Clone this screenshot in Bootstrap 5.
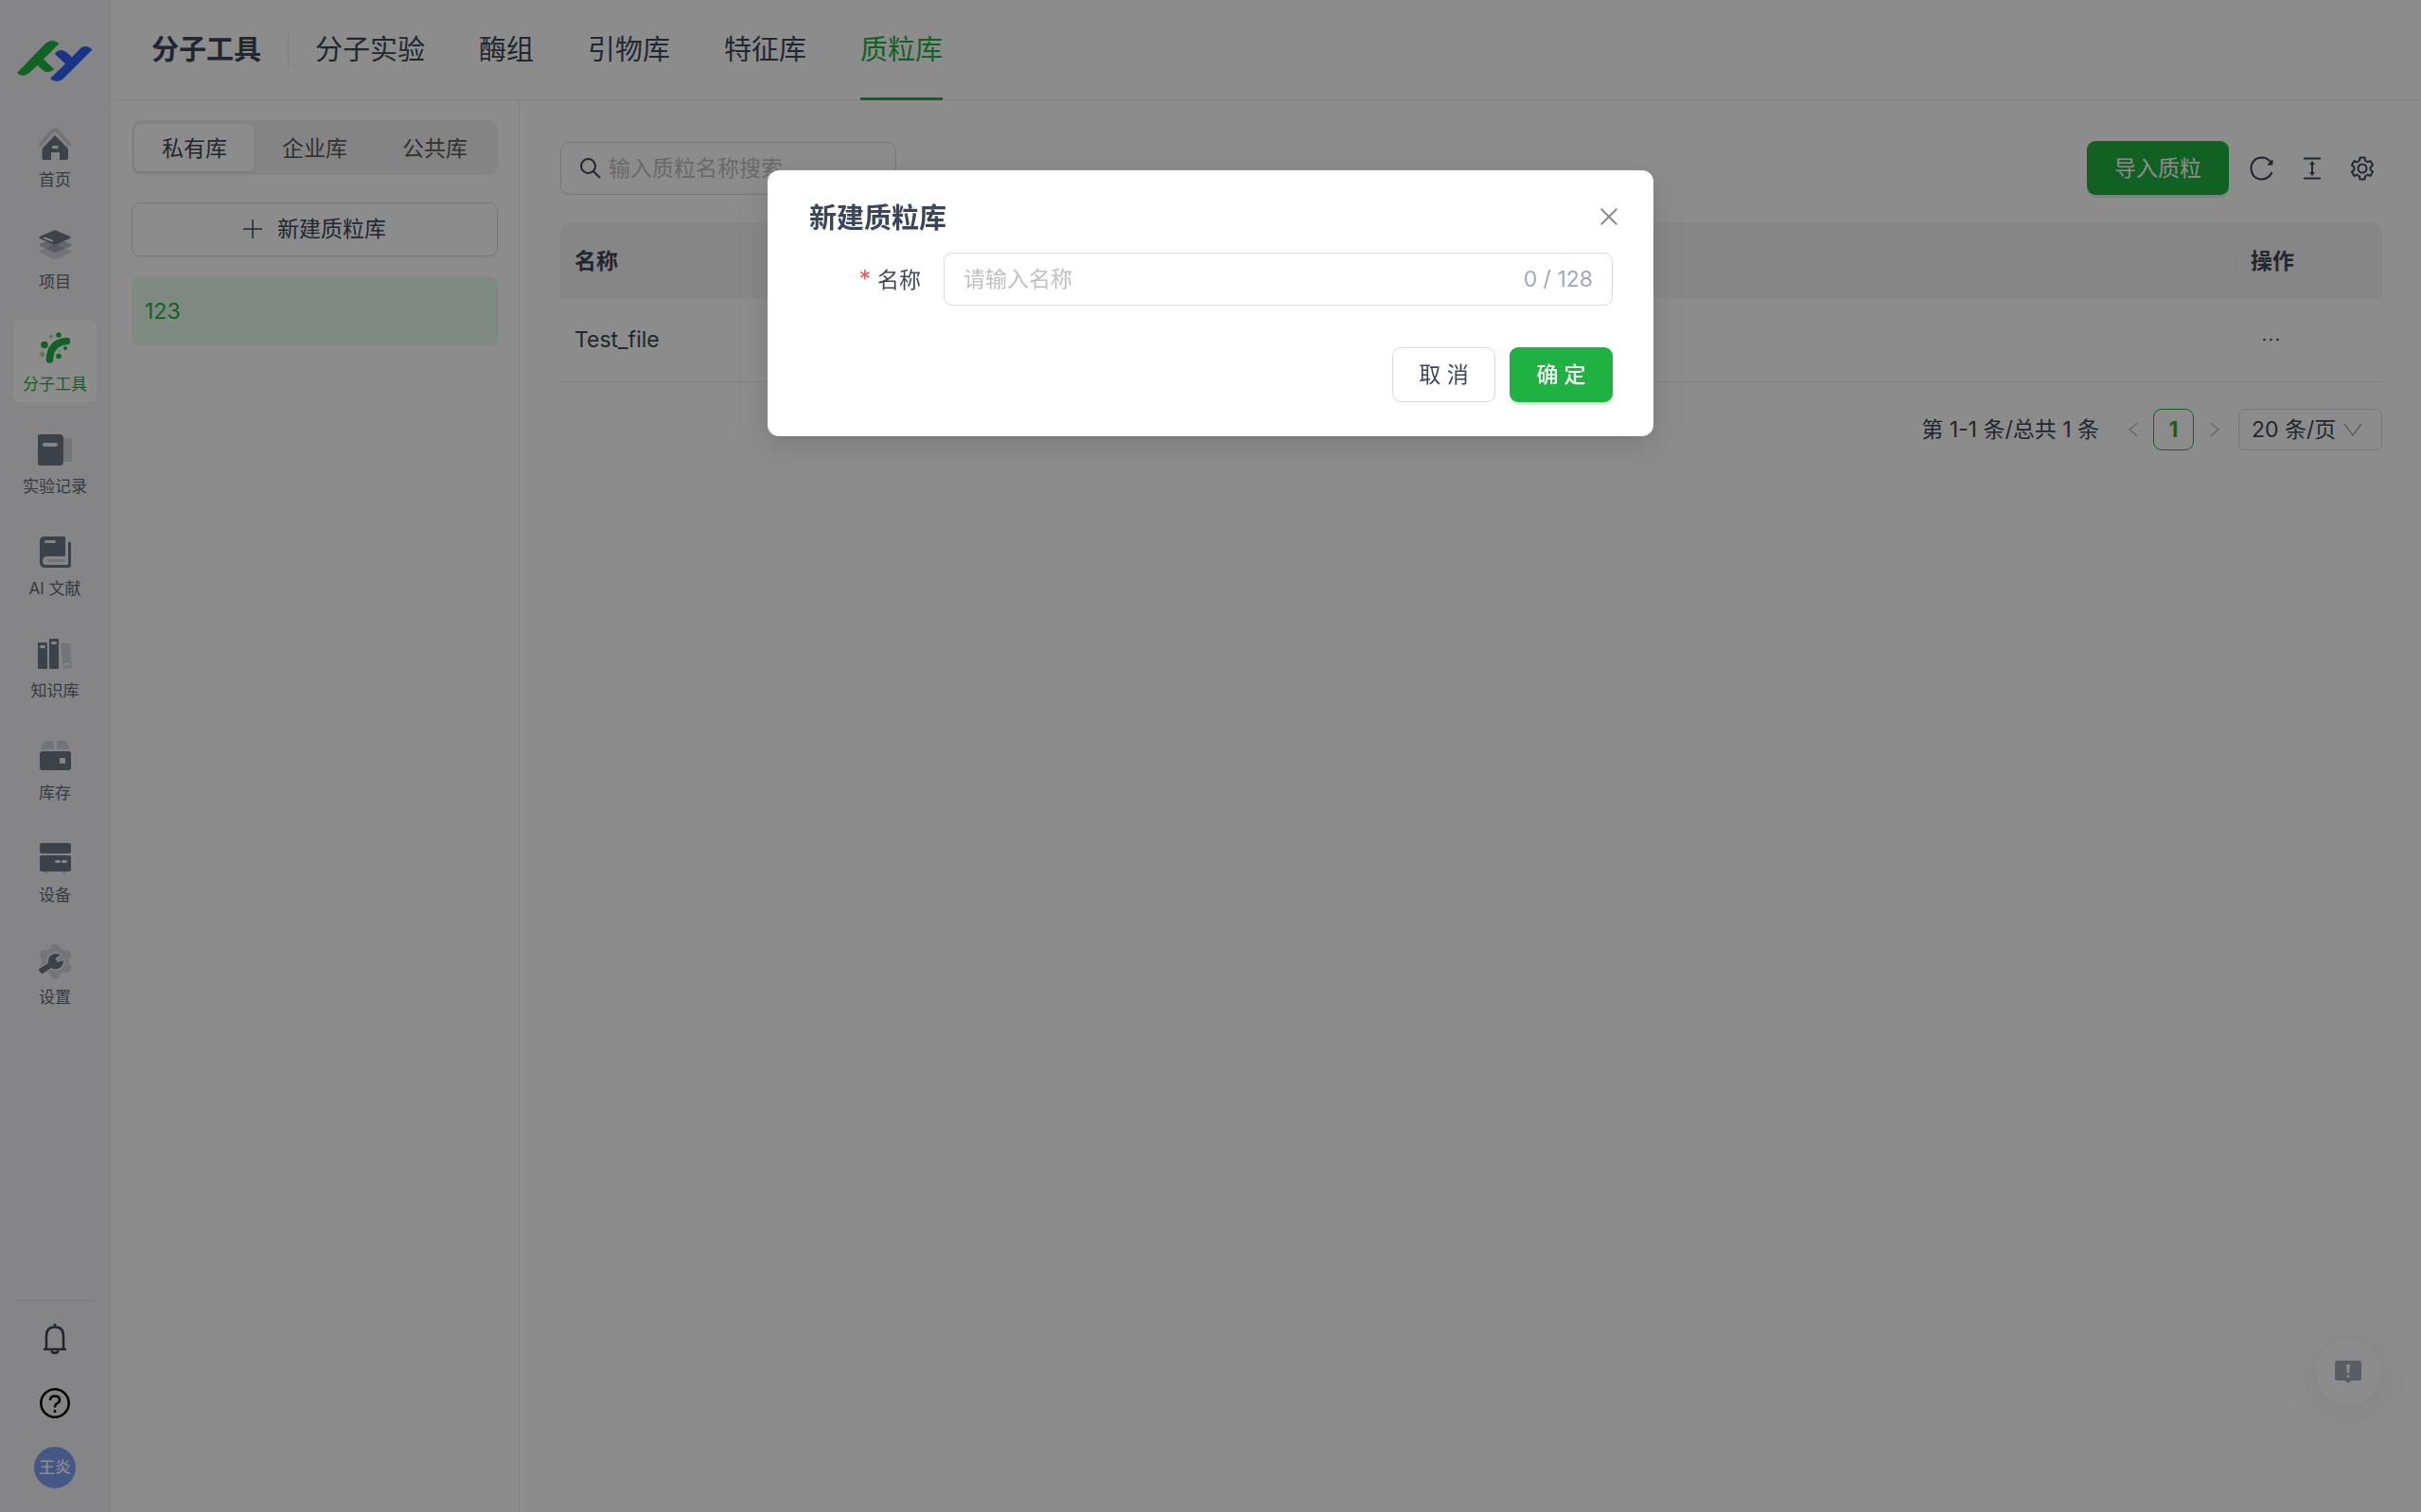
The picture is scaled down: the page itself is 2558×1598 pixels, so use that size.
<!DOCTYPE html>
<html lang="zh-CN">
<head>
<meta charset="utf-8">
<meta name="viewport" content="width=device-width, initial-scale=1">
<title>质粒库 - 分子工具</title>
<link href="https://cdn.jsdelivr.net/npm/bootstrap@5.3.0/dist/css/bootstrap.min.css" rel="stylesheet">
<style>
:root{--ink:#3d4658;--slate:#616b7a;--pale:#d1d3da;--brand:#1fb141;--line:#d9d9d9;--soft:#ebedf0}
body{font-family:Inter,"Noto Sans CJK SC",sans-serif;font-size:23px;line-height:36px;color:var(--ink);background:#fff}
svg{display:block;flex:none}
button{font-family:inherit}
.side{width:117px;background:#f2f3f7;border-right:1px solid #e9eaef;padding:43px 0 25px}
.logo{margin-bottom:35px}
.side-list{gap:21px}
.side-link{width:88px;padding:12px 0 7px;border-radius:7px;font-size:17px;line-height:24px;color:var(--slate);text-decoration:none;white-space:nowrap}
.side-link svg{margin-bottom:8px}
.side-link.active{background:#fff;color:var(--brand)}
.side-foot{width:88px;border-top:1px solid #e2e4ea;padding-top:18px;gap:24px}
.round-btn{width:44px;height:44px;border:0;padding:0;background:none;border-radius:50%;color:#3d4658}
.avatar{background:#7f9ff5;color:#fff;font-size:17px;font-weight:500}
.topbar{height:106px;border-bottom:1px solid var(--soft);padding-left:43px;font-size:29px}
.topbar h1{font-size:29px;font-weight:700;line-height:44px;margin:0;padding-right:28px;border-right:0}
.rule{width:1px;height:36px;background:#e3e5e8;margin-right:28px}
.top-tabs{gap:57px;height:106px}
.top-tabs a{color:var(--ink);text-decoration:none;line-height:105px;height:106px;border-bottom:3px solid transparent}
.top-tabs a.active{color:var(--brand);border-color:var(--brand)}
.lib{width:432px;border-right:1px solid var(--soft);padding:21px 22px 0 22px}
.seg{background:#f1f1f1;border-radius:9px;padding:4px 3px;height:58px}
.seg button{flex:1 1 0;border:0;background:none;border-radius:7px;color:#595959;padding:1px 0 0}
.seg button.active{background:#fff;color:var(--ink);box-shadow:0 1px 4px rgba(0,0,0,.1)}
.plain-btn{border:1px solid var(--line);border-radius:9px;background:#fff;color:var(--ink);box-shadow:0 3px 0 rgba(0,0,0,.02)}
.new-btn{height:57px;margin-top:29px;gap:16px;padding:0 0 2px}
.lib-item{margin-top:22px;height:72px;border-radius:7px;background:#e6f9ec;color:var(--brand);padding:0 14px;text-decoration:none}
.work{padding:43px 41px 0 43px}
.field{height:56px;border:1px solid var(--line);border-radius:9px;background:#fff;padding:0 20px}
.field input{border:0;outline:0;background:none;min-width:0;padding:0;color:var(--ink)}
.field input::placeholder{color:#bfbfbf;opacity:1}
.search{width:355px;gap:8px}
.go-btn{border:0;border-radius:9px;background:var(--brand);color:#fff;box-shadow:0 3px 0 #dff4e3}
.import-btn{width:150px;height:57px;margin-right:3px}
.tool-btn{width:42px;height:42px;border:0;background:none;padding:0;color:var(--ink)}
.tools{gap:11px}
.grid{margin:29px 0 0;--bs-table-bg:transparent;color:var(--ink)}
.grid th{height:81px;padding:0 15px;background:#f5f5f5;border:0;vertical-align:middle;font-weight:700}
.grid th:first-child{border-top-left-radius:12px}
.grid th:last-child{border-top-right-radius:12px;width:154px}
.grid th:last-child span{display:block;border-left:1px solid #ececec;margin-left:-15px;padding-left:14px}
.grid td{height:87px;padding:0 15px;border-bottom:1px solid var(--soft);vertical-align:middle;color:var(--ink)}
.grid thead,.grid tbody{border:0}
.more-btn{border:0;background:none;padding:0;width:42px;height:36px;color:var(--ink)}
.pager{margin-top:28px;height:44px}
.pager button{width:43px;height:44px;border:0;background:none;padding:0;color:#b9bcc2}
.pager .current{border:1px solid var(--brand);border-radius:9px;color:var(--brand);font-weight:700}
.total{padding-right:14px}
.size-box{width:152px;margin-left:4px}
.size-box select{appearance:none;height:44px;border:1px solid var(--line);border-radius:7px;background:#fff;color:var(--ink);padding:0 13px;line-height:36px}
.size-box svg{position:absolute;right:21px;top:15px;pointer-events:none}
.feedback{position:fixed;right:41px;bottom:112px;width:72px;height:72px;border-radius:50%;border:1px solid #f3f3f3;background:#fff;box-shadow:0 8px 36px rgba(0,0,0,.06);color:#a3abba;padding:0}
.modal-backdrop.show{opacity:.45}
.modal-dialog{max-width:936px;margin-top:180px}
.modal-content{border:0;border-radius:12px;padding:29px 43px 36px 44px;color:var(--ink);box-shadow:0 9px 23px rgba(0,0,0,.08),0 4px 9px -6px rgba(0,0,0,.12),0 13px 40px 12px rgba(0,0,0,.05)}
.modal-title{font-size:29px;line-height:44px;font-weight:700}
.x-btn{width:32px;height:32px;border:0;background:none;color:#8c8c8c;padding:0;margin-right:-12px}
.name-row{margin-top:14px}
.name-row label{width:142px;padding-right:24px;text-align:right}
.must{color:#ff4d4f;margin-right:7px;font-size:25px}
.count{color:#9ca8bd;white-space:nowrap}
.acts{margin-top:44px;gap:15px}
.acts button{width:109px;height:58px}
.acts .go-btn{font-weight:500}
</style>
</head>
<body>
<svg width="0" height="0" class="position-absolute" aria-hidden="true">
  <defs>
    <path id="tooth" d="M-4.3-7.5L-3-8.3L-2.5-11.4H2.5L3-8.3L4.3-7.5"/>
    <path id="lobe" d="M-7-12L-5-13.500L-4-16.500Q-3.500-18-2-18H2Q3.500-18 4-16.500L5-13.500L7-12V0H-7Z"/>
  </defs>
</svg>
<div class="d-flex vh-100">
  <aside class="side d-flex flex-column align-items-center flex-shrink-0">
    <a class="logo" href="#" aria-label="首页">
      <svg width="80" height="44" viewBox="0 0 80 44"><path fill="#1fb541" d="M0 34L29 4Q33 0 38 0Q42 1 44.500 3L28 19.500L39 30Q36 33.500 31 33Q29 33 27 31L21.500 26L13 34Q10 37 6 37Q3 37 0 34Z"/><path fill="#2a5ff4" d="M40 14Q42 10 46.500 10Q50 10 53 13L58 17.500L67 8Q70 5.500 73 6Q76 6 79.500 9.500L49 40Q46 43 42 43Q38 43 35 40L51 24.500Z"/></svg>
    </a>
    <nav class="side-list nav flex-column flex-nowrap" aria-label="主导航">
      <a class="side-link d-flex flex-column align-items-center" href="#"><svg width="36" height="36" viewBox="0 0 36 36"><path d="M1.500 20L15 4.500Q18 1.500 21 4.500L34.500 20" fill="none" stroke="#d1d3da" stroke-width="4"/><path fill="#6d7888" fill-rule="evenodd" d="M18 9L32 23V33Q32 35 30 35H23V27H14V35H6Q4.500 35 4.500 33V23ZM15.500 20Q14 21.500 15.500 23H21Q22.500 21.500 21 20Z"/></svg>首页</a>
      <a class="side-link d-flex flex-column align-items-center" href="#"><svg width="36" height="36" viewBox="0 0 36 36"><path fill="#d1d3da" d="M2 23Q1 24 2 25L18 32.500L35 25Q36 24 35 23L18 17Z"/><path fill="#b9bcc5" d="M2 15.500Q1 17 2 18L18 25L35 18Q36 17 35 15.500L18 10Z"/><path fill="#9fa5b0" d="M8 20.500L18 16L29 20.500L18 25Z"/><path fill="#6d7888" d="M2 8Q1 9 2 10L17 16.500Q18 17 19 16.500L34 10Q35 9 34 8L19 1.500Q18 1 17 1.500Z"/><path stroke="#f2f3f7" stroke-width="2" stroke-linecap="round" d="M7 9.500L15 12.500"/></svg>项目</a>
      <a class="side-link active d-flex flex-column align-items-center" href="#" aria-current="page"><svg width="36" height="36" viewBox="0 0 36 36" fill="#1fb141"><path d="M12.500 30Q13 12 30.500 10.500" fill="none" stroke="#1fb141" stroke-width="7.500" stroke-linecap="round"/><circle cx="22" cy="4" r="2.800"/><circle cx="7" cy="14.500" r="3.800"/><circle cx="29" cy="18" r="2"/><circle cx="22" cy="26.500" r="2.800"/><circle cx="14" cy="5.500" r="2" opacity=".4"/><circle cx="4.500" cy="24.500" r="2.700" opacity=".4"/><circle cx="22.500" cy="20.500" r="1" opacity=".4"/></svg>分子工具</a>
      <a class="side-link d-flex flex-column align-items-center" href="#"><svg width="36" height="36" viewBox="0 0 36 36"><rect x="24" y="5" width="12" height="25" rx="1" fill="#d1d3da"/><path fill="#6d7888" d="M2 1H24Q27 2 27 5V30Q27 33 24 34H2Q0 34 0 32V3Q0 1 2 1Z"/><rect x="5" y="10" width="16" height="4" rx="2" fill="#f2f3f7"/></svg>实验记录</a>
      <a class="side-link d-flex flex-column align-items-center" href="#"><svg width="36" height="36" viewBox="0 0 36 36"><path fill="#6d7888" d="M7 1H28Q29 1 29 2V21Q29 22 28 22H10Q5 22 5 27Q5 31 9 31H31Q32 31 32 30V8Q32 6.500 33.500 6.500Q35 6.500 35 8V31Q35 34 32 34H8Q2 34 2 28V6Q2 1 7 1Z"/><rect x="7" y="5" width="12" height="3" rx="1.500" fill="#f2f3f7"/><rect x="10" y="25" width="19" height="3" rx="1.500" fill="#d1d3da"/></svg>AI 文献</a>
      <a class="side-link d-flex flex-column align-items-center" href="#"><svg width="36" height="36" viewBox="0 0 36 36"><rect y="5" width="10" height="28" rx="1" fill="#6d7888"/><rect x="12" y="1" width="10" height="32" rx="1" fill="#6d7888"/><path fill="#d1d3da" d="M24 7Q24 6 25 6L33 6Q34 6 34 7L36 31Q36 32 35 32L28 33Q27 33 27 32Z"/><rect x="2" y="8" width="6" height="3" rx="1.500" fill="#f2f3f7"/><rect x="14" y="4" width="6" height="3" rx="1.500" fill="#f2f3f7"/><rect x="28" y="26" width="6" height="3" rx="1.500" fill="#f2f3f7"/></svg>知识库</a>
      <a class="side-link d-flex flex-column align-items-center" href="#"><svg width="36" height="36" viewBox="0 0 36 36"><path fill="#d1d3da" d="M8 1H15Q17 1 17 3V8Q17 10 15 10H5Q2 10 3 8L6 3Q7 1 8 1ZM21 1H28Q30 1 31 3L33 8Q34 10 32 10H22Q20 10 20 8V3Q20 1 21 1Z"/><rect x="2" y="12" width="33" height="20" rx="2.500" fill="#6d7888"/><rect x="23" y="19" width="6" height="6" fill="#f2f3f7"/></svg>库存</a>
      <a class="side-link d-flex flex-column align-items-center" href="#"><svg width="36" height="36" viewBox="0 0 36 36"><path fill="#d1d3da" d="M6 30H12L10 34H8ZM25 30H31L29 34H27Z"/><rect x="2" y="1" width="33" height="11" rx="2" fill="#6d7888"/><rect x="2" y="14" width="33" height="17" rx="2" fill="#6d7888"/><rect x="18" y="19" width="6" height="3" rx="1.500" fill="#f2f3f7"/><rect x="25" y="19" width="6" height="3" rx="1.500" fill="#f2f3f7"/></svg>设备</a>
      <a class="side-link d-flex flex-column align-items-center" href="#"><svg width="36" height="36" viewBox="0 0 36 36"><g transform="translate(18.500 18)" fill="#d1d3da"><circle r="14"/><use href="#lobe"/><use href="#lobe" transform="rotate(60)"/><use href="#lobe" transform="rotate(120)"/><use href="#lobe" transform="rotate(180)"/><use href="#lobe" transform="rotate(240)"/><use href="#lobe" transform="rotate(300)"/></g><path fill="#6d7888" stroke="#f2f3f7" stroke-width="3" paint-order="stroke" d="M1 26L11 20Q10 11 18 10Q21 9.500 24 11L18.500 15L21 19L27 17Q27 24 21 26Q17 27 14 25L5 31Q4 31.500 3 30L.8 27Z"/><path fill="#d1d3da" d="M20 15.500L27 11.500L28.500 14.500L21.500 18Z"/></svg>设置</a>
    </nav>
    <div class="side-foot d-flex flex-column align-items-center mt-auto">
      <button class="round-btn d-flex align-items-center justify-content-center" type="button" aria-label="通知"><svg width="26" height="34" viewBox="0 0 26 34" fill="none" stroke="currentColor" stroke-width="2.500"><path d="M13 1V5M4 28V14Q4 4.500 13 4.500Q22 4.500 22 14V28M1 28H25M9.500 29.500Q10 32 13 32Q16 32 16.500 29.500"/></svg></button>
      <button class="round-btn d-flex align-items-center justify-content-center" type="button" aria-label="帮助"><svg width="32" height="32" viewBox="0 0 32 32" fill="none" stroke="#000" stroke-width="2.500"><circle cx="16" cy="16" r="14.700"/><path d="M11 13Q11 8.500 16 8.500Q21 8.500 21 12.500Q21 15 18 16.500Q16 17.500 16 20.500"/><path d="M16 23V26"/></svg></button>
      <button class="round-btn avatar" type="button">王炎</button>
    </div>
  </aside>

  <div class="d-flex flex-column flex-grow-1">
    <header class="topbar d-flex align-items-center">
      <h1>分子工具</h1>
      <div class="rule"></div>
      <nav class="top-tabs d-flex" aria-label="分子工具">
        <a href="#">分子实验</a><a href="#">酶组</a><a href="#">引物库</a><a href="#">特征库</a><a class="active" href="#" aria-current="page">质粒库</a>
      </nav>
    </header>
    <div class="d-flex flex-grow-1">
      <section class="lib flex-shrink-0">
        <div class="seg d-flex"><button class="active" type="button">私有库</button><button type="button">企业库</button><button type="button">公共库</button></div>
        <button class="plain-btn new-btn w-100 d-flex align-items-center justify-content-center" type="button"><svg width="20" height="20" viewBox="0 0 20 20" stroke="currentColor" stroke-width="1.500"><path d="M10 0V20M0 10H20"/></svg>新建质粒库</button>
        <a class="lib-item d-flex align-items-center" href="#">123</a>
      </section>
      <main class="work flex-grow-1">
        <div class="d-flex align-items-center justify-content-between">
          <div class="field search d-flex align-items-center">
            <svg width="22" height="22" viewBox="0 0 22 22" fill="none" stroke="currentColor" stroke-width="2"><circle cx="8.500" cy="8.500" r="7.500"/><path d="M14 14L21 21"/></svg>
            <input class="flex-grow-1" type="text" placeholder="输入质粒名称搜索" aria-label="输入质粒名称搜索">
          </div>
          <div class="tools d-flex align-items-center">
            <button class="go-btn import-btn" type="button">导入质粒</button>
            <button class="tool-btn d-flex align-items-center justify-content-center" type="button" aria-label="刷新"><svg width="26" height="26" viewBox="0 0 26 26" fill="none" stroke="currentColor" stroke-width="2"><path d="M23.500 17Q20.500 24 13 24.500Q2 24 1.500 13Q2 2 13 1.500Q19 1.500 22.500 7"/><path d="M24 4V9H19Z" fill="currentColor" stroke-width="1"/></svg></button>
            <button class="tool-btn d-flex align-items-center justify-content-center" type="button" aria-label="密度"><svg width="20" height="24" viewBox="0 0 20 24" stroke="currentColor" stroke-width="2"><path d="M1 1.500H19M1 22.500H19M10 6V18"/><path d="M10 4L13 8H7ZM10 20L13 16H7Z" fill="currentColor" stroke="none"/></svg></button>
            <button class="tool-btn d-flex align-items-center justify-content-center" type="button" aria-label="列设置"><svg width="26" height="26" viewBox="-13 -13 26 26" fill="none" stroke="currentColor" stroke-width="2" stroke-linejoin="round"><use href="#tooth"/><use href="#tooth" transform="rotate(60)"/><use href="#tooth" transform="rotate(120)"/><use href="#tooth" transform="rotate(180)"/><use href="#tooth" transform="rotate(240)"/><use href="#tooth" transform="rotate(300)"/><circle r="4.500"/></svg></button>
          </div>
        </div>
        <table class="table grid">
          <thead><tr><th scope="col">名称</th><th scope="col"><span>操作</span></th></tr></thead>
          <tbody><tr><td>Test_file</td><td><button class="more-btn d-flex align-items-center justify-content-center" type="button" aria-label="更多"><svg width="17" height="4" viewBox="0 0 17 4" fill="currentColor"><circle cx="1.500" cy="2" r="1.300"/><circle cx="8.500" cy="2" r="1.300"/><circle cx="15.500" cy="2" r="1.300"/></svg></button></td></tr></tbody>
        </table>
        <div class="pager d-flex align-items-center justify-content-end">
          <span class="total">第 1-1 条/总共 1 条</span>
          <button class="d-flex align-items-center justify-content-center" type="button" aria-label="上一页" disabled><svg width="10" height="16" viewBox="0 0 10 16" fill="none" stroke="currentColor" stroke-width="1.500"><path d="M9.500 1L1 8L9.500 15"/></svg></button>
          <button class="current" type="button" aria-current="page">1</button>
          <button class="d-flex align-items-center justify-content-center" type="button" aria-label="下一页" disabled><svg width="10" height="16" viewBox="0 0 10 16" fill="none" stroke="currentColor" stroke-width="1.500"><path d="M.5 1L9 8L.5 15"/></svg></button>
          <div class="size-box position-relative"><select class="w-100" aria-label="每页条数"><option>20 条/页</option></select><svg width="20" height="14" viewBox="0 0 20 14" fill="none" stroke="#b5b5b5" stroke-width="1.700"><path d="M1 1L10 13L19 1"/></svg></div>
        </div>
      </main>
    </div>
  </div>
</div>

<button class="feedback d-flex align-items-center justify-content-center" type="button" aria-label="反馈"><svg width="28" height="24" viewBox="0 0 28 24"><path fill="currentColor" d="M2 0H26Q28 0 28 2V19Q28 21 26 21H17.500L14 24L10.500 21H2Q0 21 0 19V2Q0 0 2 0Z"/><path fill="#fff" d="M12 4H16L15 13.500H13Z"/><circle cx="14" cy="16.500" r="1.500" fill="#fff"/></svg></button>

<div class="modal-backdrop show"></div>
<div class="modal d-block" role="dialog" aria-modal="true" aria-labelledby="dlgTitle" tabindex="-1">
  <div class="modal-dialog">
    <form class="modal-content">
      <div class="d-flex align-items-start justify-content-between">
        <h2 class="modal-title" id="dlgTitle">新建质粒库</h2>
        <button class="x-btn d-flex align-items-center justify-content-center mt-1" type="button" aria-label="关闭"><svg width="18" height="18" viewBox="0 0 18 18" stroke="currentColor" stroke-width="2"><path d="M.7.700L17.300 17.300M17.300.700L.700 17.300"/></svg></button>
      </div>
      <div class="name-row d-flex align-items-center">
        <label for="libName"><span class="must">*</span>名称</label>
        <div class="field d-flex align-items-center flex-grow-1">
          <input class="flex-grow-1" id="libName" type="text" maxlength="128" placeholder="请输入名称">
          <span class="count">0 / 128</span>
        </div>
      </div>
      <div class="acts d-flex justify-content-end">
        <button class="plain-btn" type="button">取 消</button>
        <button class="go-btn" type="submit">确 定</button>
      </div>
    </form>
  </div>
</div>
<script src="https://cdn.jsdelivr.net/npm/bootstrap@5.3.0/dist/js/bootstrap.bundle.min.js"></script>
</body>
</html>
